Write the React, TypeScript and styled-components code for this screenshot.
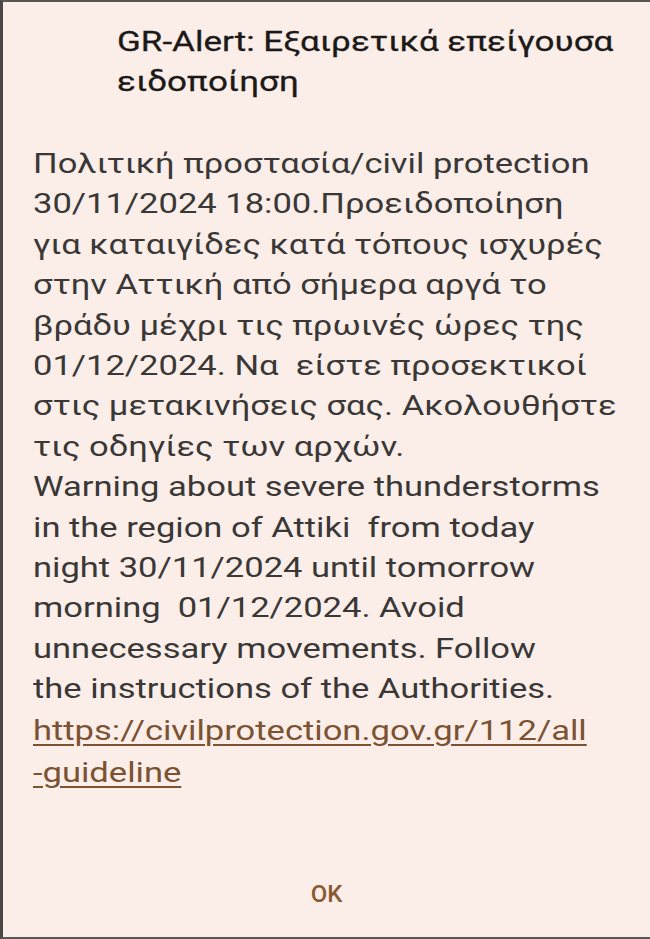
import React from "react";
import styled, { createGlobalStyle } from "styled-components";

const Global = createGlobalStyle`
  html, body { margin: 0; padding: 0; background: #fbeee9; }
  body { font-family: Roboto, "Noto Sans", sans-serif; }
`;

const Dialog = styled.div`
  box-sizing: border-box;
  width: 650px;
  height: 939px;
  background: #fbeee9;
  border-top: 2px solid #5a5654;
  border-left: 3px solid #4a4644;
  border-bottom: 2px solid #5a5654;
  display: flex;
  flex-direction: column;
  padding: 20px 0 0 0;
  overflow: hidden;
`;

const Title = styled.h1`
  margin: 0 0 0 114px;
  font-family: Roboto, sans-serif;
  font-weight: 400;
  font-size: 28px;
  line-height: 40px;
  color: #1c1a18;
  white-space: pre;
  transform: scaleX(1.25);
  transform-origin: left top;
  -webkit-text-stroke: 0.3px #1c1a18;
`;

const Body = styled.div`
  margin: 42px 0 0 30px;
  font-family: Roboto, sans-serif;
  font-size: 28px;
  line-height: 40.4px;
  color: #3a3836;
  white-space: pre;
  transform: scaleX(1.233);
  transform-origin: left top;
`;

const Line = styled.div``;

const Link = styled.a`
  display: block;
  color: #7b5333;
  text-decoration: underline;
  text-underline-offset: 4px;
  text-decoration-thickness: 2px;
  line-height: 42px;
`;

const Footer = styled.div`
  margin-top: auto;
  display: flex;
  justify-content: center;
  padding-bottom: 21px;
`;

const OkButton = styled.button`
  background: none;
  border: none;
  font-family: Roboto, sans-serif;
  font-weight: 500;
  font-size: 24px;
  color: #8a5a30;
  padding: 8px 16px;
  cursor: pointer;
`;

const lines = [
  "Πολιτική προστασία/civil protection",
  "30/11/2024 18:00.Προειδοποίηση",
  "για καταιγίδες κατά τόπους ισχυρές",
  "στην Αττική από σήμερα αργά το",
  "βράδυ μέχρι τις πρωινές ώρες της",
  "01/12/2024. Να  είστε προσεκτικοί",
  "στις μετακινήσεις σας. Ακολουθήστε",
  "τις οδηγίες των αρχών.",
  "Warning about severe thunderstorms",
  "in the region of Attiki  from today",
  "night 30/11/2024 until tomorrow",
  "morning  01/12/2024. Avoid",
  "unnecessary movements. Follow",
  "the instructions of the Authorities.",
];

export default function App() {
  return (
    <>
      <Global />
      <Dialog>
        <Title>
          GR-Alert: Εξαιρετικά επείγουσα
          <br />
          ειδοποίηση
        </Title>
        <Body>
          {lines.map((l, i) => (
            <Line key={i}>{l}</Line>
          ))}
          <Link href="#">
            https://civilprotection.gov.gr/112/all
            <br />
            -guideline
          </Link>
        </Body>
        <Footer>
          <OkButton>OK</OkButton>
        </Footer>
      </Dialog>
    </>
  );
}
